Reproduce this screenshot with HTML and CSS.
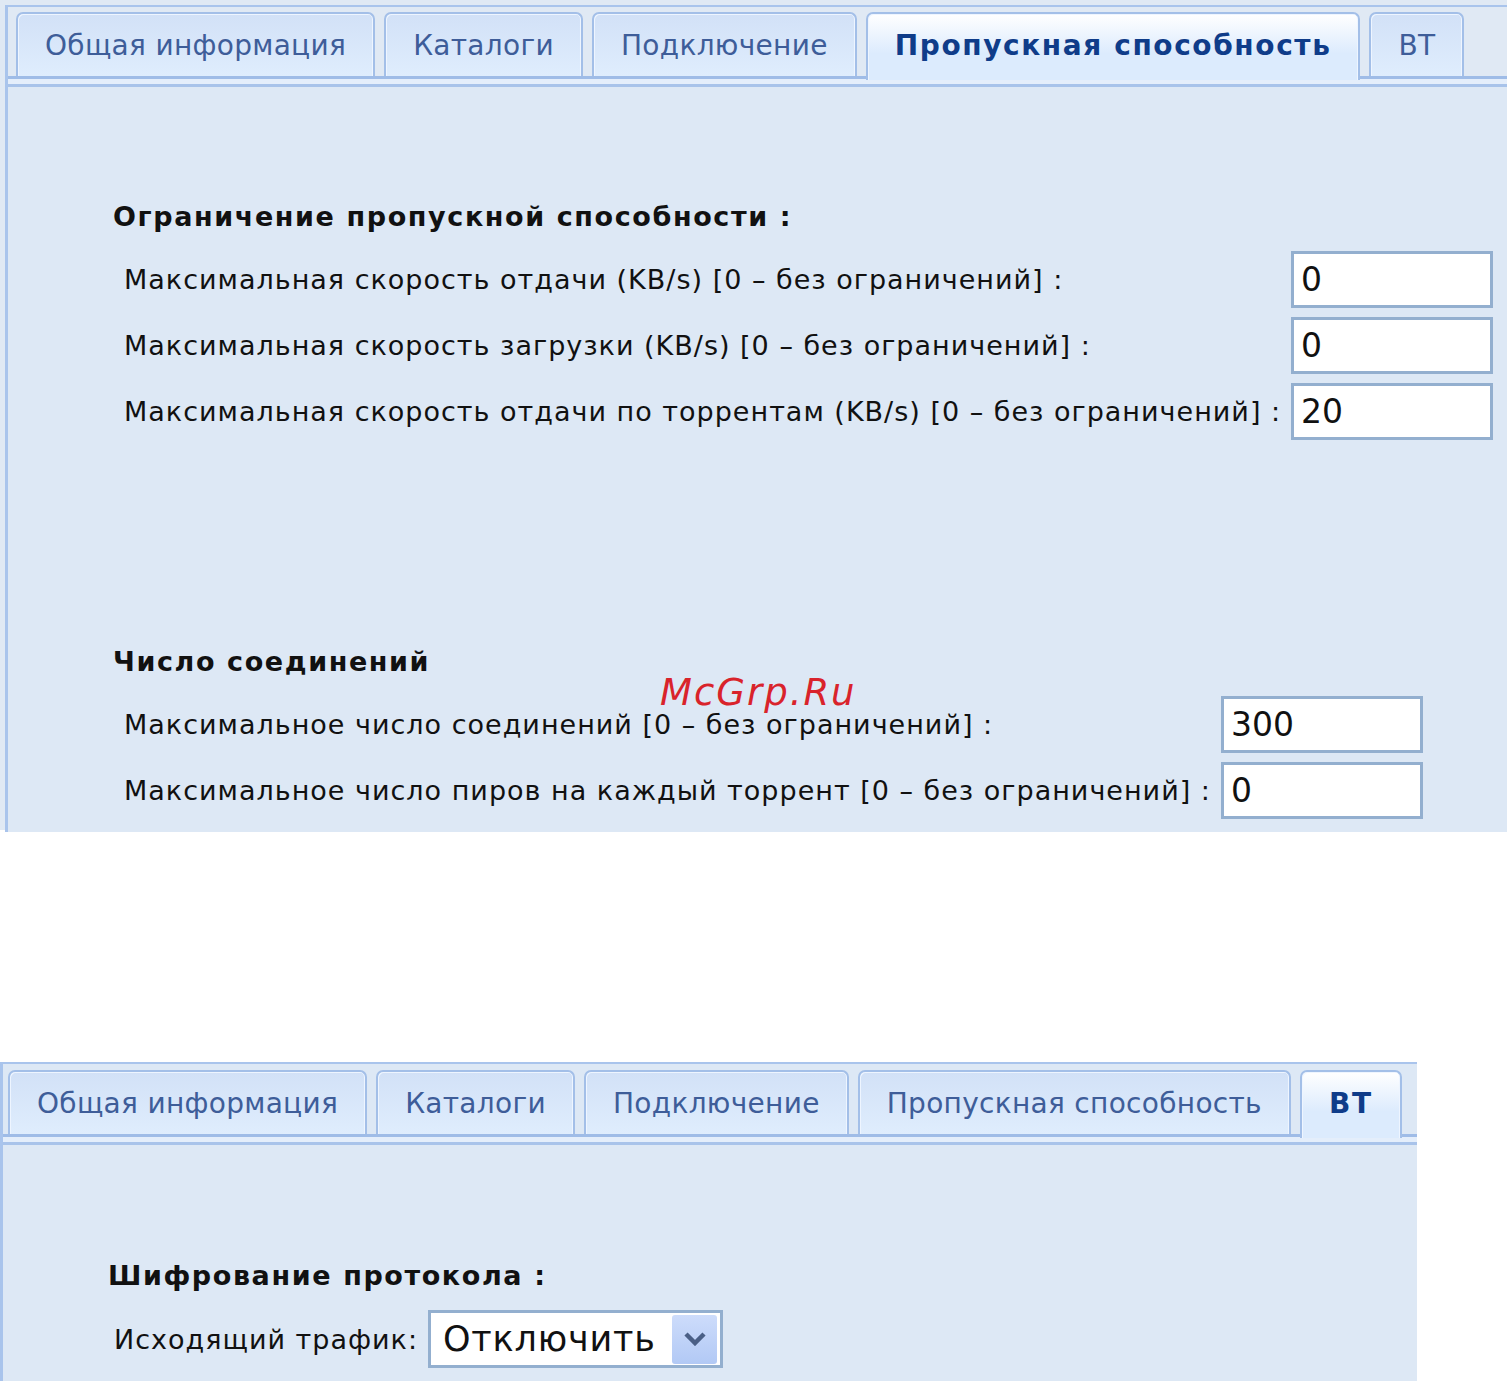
FILE: index.html
```html
<!DOCTYPE html>
<html lang="ru">
<head>
  <meta charset="UTF-8">
  <meta name="viewport" content="width=device-width, initial-scale=1.0">
  <title>Настройки</title>
  <link rel="stylesheet" href="styles.css">
</head>
<body>

  <!-- Bandwidth settings page -->
  <div class="sheet sheet-top">
    <div class="panel">
      <div class="tabs">
        <div class="tab">Общая информация</div>
        <div class="tab">Каталоги</div>
        <div class="tab">Подключение</div>
        <div class="tab active">Пропускная способность</div>
        <div class="tab">BT</div>
      </div>
      <div class="tabs-base"></div>

      <div class="panel-body">
        <div class="group group-speed">
          <h3>Ограничение пропускной способности :</h3>
          <div class="fields">
            <label>Максимальная скорость отдачи (KB/s) [0 – без ограничений] :</label>
            <input type="text" value="0">
            <label>Максимальная скорость загрузки (KB/s) [0 – без ограничений] :</label>
            <input type="text" value="0">
            <label>Максимальная скорость отдачи по торрентам (KB/s) [0 – без ограничений] :</label>
            <input type="text" value="20">
          </div>
        </div>

        <div class="group group-conn">
          <h3>Число соединений</h3>
          <div class="fields">
            <label>Максимальное число соединений [0 – без ограничений] :</label>
            <input type="text" value="300">
            <label>Максимальное число пиров на каждый торрент [0 – без ограничений] :</label>
            <input type="text" value="0">
          </div>
        </div>
      </div>
    </div>
    <div class="watermark">McGrp.Ru</div>
  </div>

  <!-- BT settings page -->
  <div class="sheet sheet-bottom">
    <div class="panel">
      <div class="tabs">
        <div class="tab">Общая информация</div>
        <div class="tab">Каталоги</div>
        <div class="tab">Подключение</div>
        <div class="tab">Пропускная способность</div>
        <div class="tab active">BT</div>
      </div>
      <div class="tabs-base"></div>

      <div class="panel-body">
        <div class="group group-crypt">
          <h3>Шифрование протокола :</h3>
          <div class="fields">
            <label>Исходящий трафик:</label>
            <div class="select">
              <span>Отключить</span>
              <div class="select-arrow">
                <svg width="22" height="14" viewBox="0 0 22 14">
                  <path d="M2 2 L11 11 L20 2" fill="none" stroke="#4a5f86" stroke-width="4.5"/>
                </svg>
              </div>
            </div>
          </div>
        </div>
      </div>
    </div>
  </div>

</body>
</html>
```

FILE: styles.css
```css
/* General styling */
body {
  font-family: 'DejaVu Sans', 'Liberation Sans', sans-serif;
  margin: 0;
  padding: 0;
  background-color: #fff;
  color: #111;
}

.sheet {
  position: relative;
}

.sheet-top {
  height: 830px;
  padding: 5px 0 0 5px;
  box-sizing: border-box;
  background-color: #e0e9f4;
}

.sheet-bottom {
  width: 1417px;
  height: 319px;
  margin-top: 232px;
}

/* Panel with tab header */
.panel {
  height: 100%;
  display: flex;
  flex-direction: column;
  border-top: 2px solid #a9c4ec;
  border-left: 3px solid #a9c4ec;
  background-color: #dde8f5;
}

.sheet-top .panel {
  background-color: #e0e9f4;
}

.tabs {
  display: flex;
  gap: 9px;
  padding: 5px 0 0 8px;
}

.sheet-bottom .tabs {
  padding: 6px 0 0 5px;
}

.tab {
  position: relative;
  flex-shrink: 0;
  height: 62px;
  padding: 0 27px;
  display: flex;
  align-items: center;
  white-space: nowrap;
  font-size: 28px;
  letter-spacing: 0.3px;
  color: #3e5d99;
  border: 2px solid #a3bfe8;
  border-bottom: none;
  border-radius: 7px 7px 0 0;
  background: linear-gradient(#d2e1f7, #dfedfd);
  box-shadow: inset 1px 1px 0 #eef5ff, inset -1px 0 0 #eef5ff;
}

.tab.active {
  z-index: 1;
  margin-bottom: -4px;
  padding-bottom: 4px;
  font-weight: bold;
  letter-spacing: 1.6px;
  color: #0f3c89;
  background: linear-gradient(#ffffff, #dcebfd 60%);
}

.tabs-base {
  height: 5px;
  border-top: 3px solid #9fbce7;
  border-bottom: 3px solid #a8c3ea;
  background-color: #e4eefb;
}

.panel-body {
  flex: 1;
  padding-left: 105px;
  background-color: #dde8f5;
}

/* Field groups */
.group h3 {
  margin: 0 0 18px;
  font-size: 27px;
  line-height: 32px;
  letter-spacing: 1.6px;
  color: #111;
}

.group-speed {
  margin-top: 114px;
}

.group-conn {
  margin-top: 206px;
}

.group-crypt {
  margin-top: 115px;
}

.fields {
  display: grid;
  grid-template-columns: auto auto;
  justify-content: start;
  align-items: center;
  column-gap: 10px;
  row-gap: 9px;
}

.fields label {
  padding-left: 11px;
  font-size: 27px;
  letter-spacing: 1px;
  white-space: nowrap;
}

.group-crypt .fields label {
  padding-left: 6px;
}

.fields input {
  width: 202px;
  height: 57px;
  box-sizing: border-box;
  padding: 0 7px;
  font-family: 'DejaVu Sans', sans-serif;
  font-size: 33px;
  color: #111;
  background-color: #fff;
  border: 3px solid #93afcf;
}

/* Drop-down */
.select {
  width: 295px;
  height: 58px;
  box-sizing: border-box;
  padding: 0 3px 0 12px;
  display: flex;
  align-items: center;
  justify-content: space-between;
  background-color: #fff;
  border: 3px solid #93afcf;
  font-size: 35px;
  letter-spacing: 0.8px;
}

.select-arrow {
  width: 45px;
  height: 49px;
  display: flex;
  align-items: center;
  justify-content: center;
  border-radius: 3px;
  background: linear-gradient(#cddcfb, #b2c9f5);
}

/* Site stamp */
.watermark {
  position: absolute;
  left: 660px;
  top: 671px;
  font-size: 37px;
  font-style: italic;
  letter-spacing: 2px;
  color: #d9232b;
}
```
